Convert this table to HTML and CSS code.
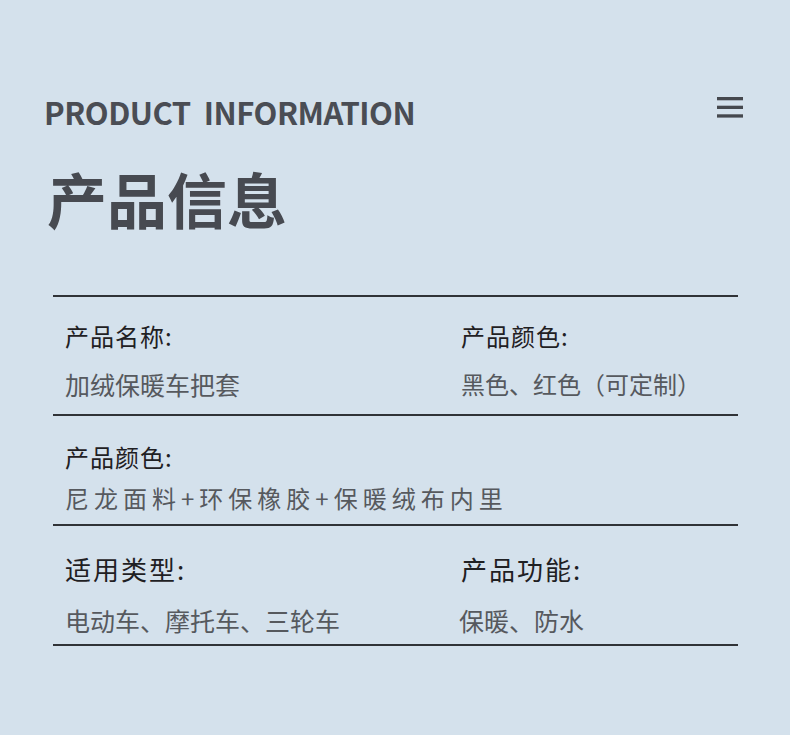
FILE: index.html
```html
<!DOCTYPE html>
<html lang="zh">
<head>
<meta charset="utf-8">
<title>产品信息</title>
<link rel="stylesheet" href="styles.css">
</head>
<body>
	<div class="page">
		<!-- header -->
		<div class="header">
			<div class="subtitle">PRODUCT&nbsp; INFORMATION</div>
			<svg class="menu" width="26" height="21" viewBox="0 0 26 21">
				<rect x="0" y="0" width="26" height="3.3" fill="#45484e"/>
				<rect x="0" y="8.7" width="26" height="3.3" fill="#45484e"/>
				<rect x="0" y="17.3" width="26" height="3.3" fill="#45484e"/>
			</svg>
		</div>
		<h1>产品信息</h1>

		<!-- info table -->
		<div class="info">
			<div class="row row1">
				<div class="cell">
					<div class="label">产品名称:</div>
					<div class="value">加绒保暖车把套</div>
				</div>
				<div class="cell">
					<div class="label">产品颜色:</div>
					<div class="value narrow">黑色、红色（可定制）</div>
				</div>
			</div>
			<div class="row row2">
				<div class="cell wide">
					<div class="label">产品颜色:</div>
					<div class="value spaced">尼龙面料+环保橡胶+保暖绒布内里</div>
				</div>
			</div>
			<div class="row row3">
				<div class="cell">
					<div class="label big">适用类型:</div>
					<div class="value">电动车、摩托车、三轮车</div>
				</div>
				<div class="cell">
					<div class="label big">产品功能:</div>
					<div class="value shifted">保暖、防水</div>
				</div>
			</div>
		</div>
	</div>
</body>
</html>
```

FILE: styles.css
```css
body {
	margin: 0;
	background: #d4e1ec;
	font-family: "Noto Sans CJK SC", "Noto Sans", sans-serif;
}

.page {
	padding: 92px 47px 0 44px;
}

.header {
	display: flex;
	justify-content: space-between;
	align-items: flex-start;
}

.subtitle {
	font-size: 31px;
	line-height: 40px;
	font-weight: 700;
	color: #4a4d54;
	letter-spacing: -0.5px;
}

.menu {
	display: block;
	margin-top: 5px;
}

h1 {
	margin: 31px 0 0 3px;
	font-size: 60px;
	line-height: 70px;
	font-weight: 700;
	color: #474a51;
	letter-spacing: 0;
}

.info {
	margin: 62px 5px 0 9px;
	border-bottom: 2px solid #303337;
}

.row {
	display: grid;
	grid-template-columns: 396px 1fr;
	padding-left: 12px;
	border-top: 2px solid #303337;
}

.cell.wide {
	grid-column: 1 / 3;
}

.label {
	font-size: 24px;
	line-height: 30px;
	color: #1f2023;
	letter-spacing: 1px;
}

.label.big {
	font-size: 26px;
	line-height: 32px;
	letter-spacing: 2px;
}

.value {
	font-size: 25px;
	line-height: 30px;
	color: #56595e;
}

.value.narrow {
	font-size: 24px;
}

.value.spaced {
	font-size: 24px;
	letter-spacing: 5px;
}

.value.shifted {
	margin-left: -2px;
}

.row1 {
	padding-top: 24px;
	padding-bottom: 15px;
}

.row1 .value {
	margin-top: 18px;
}

.row2 {
	padding-top: 26px;
	padding-bottom: 11px;
}

.row2 .value {
	margin-top: 11px;
}

.row3 {
	padding-top: 27px;
	padding-bottom: 9px;
}

.row3 .value {
	margin-top: 20px;
}
```
